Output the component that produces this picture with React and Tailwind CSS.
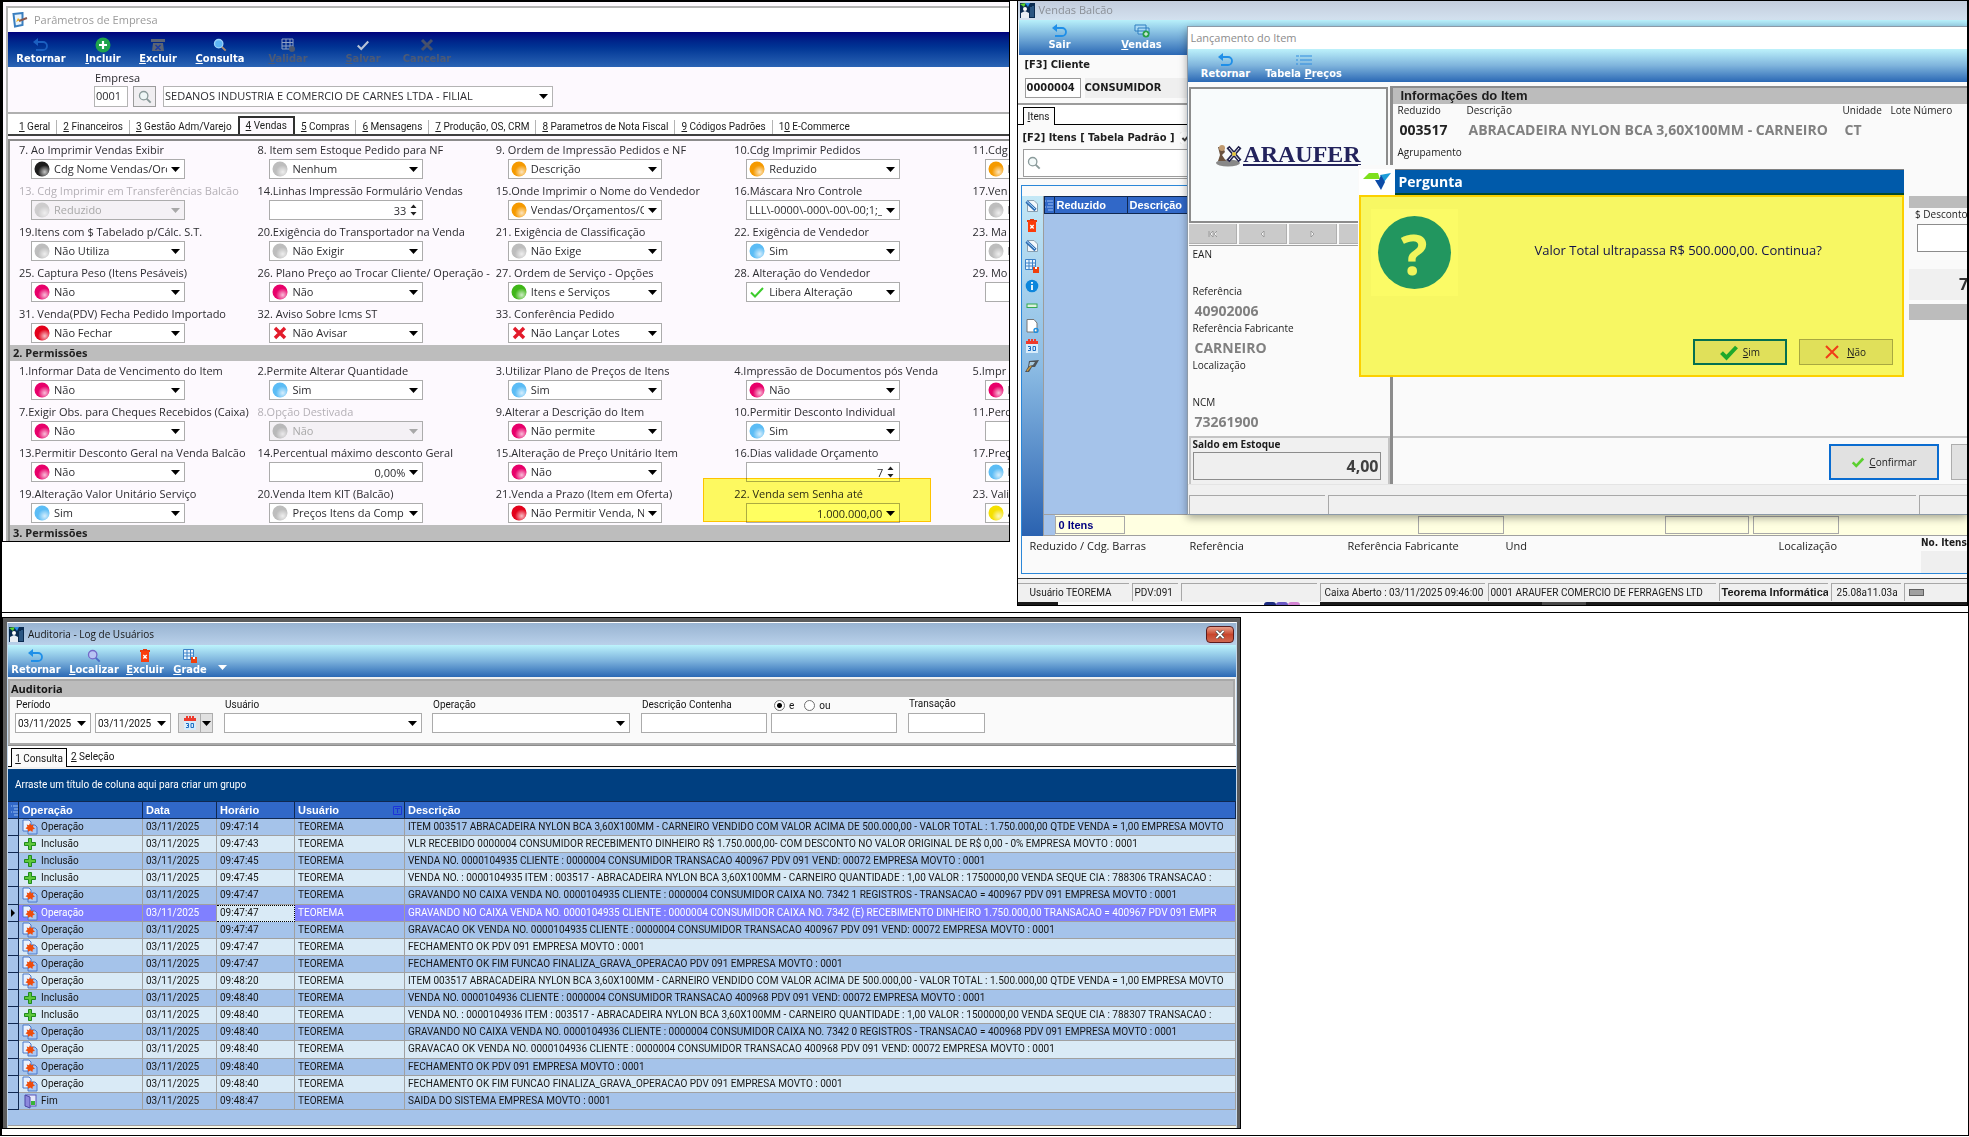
import { useId } from 'react';

const BALLS = {
  black: '#1c1c1c',
  gray: '#bdbdbd',
  dark: '#a0a0a0',
  orange: '#f59a00',
  blue: '#5bbcf5',
  pink: '#e8006a',
  green: '#3fb618',
  red: '#e3001b',
  yellow: '#f5e000',
};

const SECTION_1 = [
  { label: '7. Ao Imprimir Vendas Exibir', icon: 'black', value: 'Cdg Nome Vendas/Orçamentos' },
  { label: '8. Item sem Estoque Pedido para NF', icon: 'gray', value: 'Nenhum' },
  { label: '9. Ordem de Impressão Pedidos e NF', icon: 'orange', value: 'Descrição' },
  { label: '10.Cdg Imprimir Pedidos', icon: 'orange', value: 'Reduzido' },
  { label: '11.Cdg', icon: 'orange', value: 'R' },
  { label: '13. Cdg Imprimir em Transferências Balcão', icon: 'gray', value: 'Reduzido', disabled: true },
  { label: '14.Linhas Impressão Formulário Vendas', type: 'spin', value: '33' },
  { label: '15.Onde Imprimir o Nome do Vendedor', icon: 'orange', value: 'Vendas/Orçamentos/OS' },
  { label: '16.Máscara Nro Controle', value: 'LLL\\-0000\\-000\\-00\\-00;1;_' },
  { label: '17.Ven', icon: 'gray', value: 'N' },
  { label: '19.Itens com $ Tabelado p/Cálc. S.T.', icon: 'gray', value: 'Não Utiliza' },
  { label: '20.Exigência do Transportador na Venda', icon: 'gray', value: 'Não Exigir' },
  { label: '21. Exigência de Classificação', icon: 'gray', value: 'Não Exige' },
  { label: '22. Exigência de Vendedor', icon: 'blue', value: 'Sim' },
  { label: '23. Ma', icon: 'gray', value: 'N' },
  { label: '25. Captura Peso (Itens Pesáveis)', icon: 'pink', value: 'Não' },
  { label: '26. Plano Preço ao Trocar Cliente/ Operação -', icon: 'pink', value: 'Não' },
  { label: '27. Ordem de Serviço - Opções', icon: 'green', value: 'Itens e Serviços' },
  { label: '28. Alteração do Vendedor', icon: 'check', value: 'Libera Alteração' },
  { label: '29. Mo', type: 'text', value: '' },
  { label: '31. Venda(PDV) Fecha Pedido Importado', icon: 'red', value: 'Não Fechar' },
  { label: '32. Aviso Sobre Icms ST', icon: 'cross', value: 'Não Avisar' },
  { label: '33. Conferência Pedido', icon: 'cross', value: 'Não Lançar Lotes' },
];

const SECTION_2 = [
  { label: '1.Informar Data de Vencimento do Item', icon: 'pink', value: 'Não' },
  { label: '2.Permite Alterar Quantidade', icon: 'blue', value: 'Sim' },
  { label: '3.Utilizar Plano de Preços de Itens', icon: 'blue', value: 'Sim' },
  { label: '4.Impressão de Documentos pós Venda', icon: 'pink', value: 'Não' },
  { label: '5.Impr', icon: 'pink', value: 'N' },
  { label: '7.Exigir Obs. para Cheques Recebidos (Caixa)', icon: 'pink', value: 'Não' },
  { label: '8.Opção Destivada', icon: 'dark', value: 'Não', disabled: true },
  { label: '9.Alterar a Descrição do Item', icon: 'pink', value: 'Não permite' },
  { label: '10.Permitir Desconto Individual', icon: 'blue', value: 'Sim' },
  { label: '11.Perc', type: 'text', value: '' },
  { label: '13.Permitir Desconto Geral na Venda Balcão', icon: 'pink', value: 'Não' },
  { label: '14.Percentual máximo desconto Geral', type: 'number', value: '0,00%' },
  { label: '15.Alteração de Preço Unitário Item', icon: 'pink', value: 'Não' },
  { label: '16.Dias validade Orçamento', type: 'spin', value: '7' },
  { label: '17.Preç', icon: 'blue', value: 'N' },
  { label: '19.Alteração Valor Unitário Serviço', icon: 'blue', value: 'Sim' },
  { label: '20.Venda Item KIT (Balcão)', icon: 'gray', value: 'Preços Itens da Comp' },
  { label: '21.Venda a Prazo (Item em Oferta)', icon: 'red', value: 'Não Permitir Venda, Na' },
  { label: '22. Venda sem Senha até', type: 'number', value: '1.000.000,00', highlight: true },
  { label: '23. Vali', icon: 'yellow', value: 'A' },
];

const TABS = [
  ['1', 'Geral'],
  ['2', 'Financeiros'],
  ['3', 'Gestão Adm/Varejo'],
  ['4', 'Vendas'],
  ['5', 'Compras'],
  ['6', 'Mensagens'],
  ['7', 'Produção, OS, CRM'],
  ['8', 'Parametros de Nota Fiscal'],
  ['9', 'Códigos Padrões'],
  ['10', 'E-Commerce'],
];

const LOG = [
  ['Operação', '09:47:14', 'ITEM 003517 ABRACADEIRA NYLON BCA 3,60X100MM - CARNEIRO VENDIDO COM VALOR ACIMA DE 500.000,00 - VALOR TOTAL : 1.750.000,00 QTDE VENDA = 1,00 EMPRESA MOVTO'],
  ['Inclusão', '09:47:43', 'VLR RECEBIDO 0000004 CONSUMIDOR RECEBIMENTO DINHEIRO R$ 1.750.000,00- COM DESCONTO NO VALOR ORIGINAL DE R$ 0,00 - 0% EMPRESA MOVTO : 0001'],
  ['Inclusão', '09:47:45', 'VENDA NO. 0000104935 CLIENTE : 0000004 CONSUMIDOR TRANSACAO 400967 PDV 091 VEND: 00072 EMPRESA MOVTO : 0001'],
  ['Inclusão', '09:47:45', 'VENDA NO. : 0000104935 ITEM : 003517 - ABRACADEIRA NYLON BCA 3,60X100MM - CARNEIRO QUANTIDADE : 1,00 VALOR : 1750000,00 VENDA SEQUE CIA : 788306 TRANSACAO :'],
  ['Operação', '09:47:47', 'GRAVANDO NO CAIXA VENDA NO. 0000104935 CLIENTE : 0000004 CONSUMIDOR CAIXA NO. 7342 1 REGISTROS - TRANSACAO = 400967 PDV 091 EMPRESA MOVTO : 0001'],
  ['Operação', '09:47:47', 'GRAVANDO NO CAIXA VENDA NO. 0000104935 CLIENTE : 0000004 CONSUMIDOR CAIXA NO. 7342 (E) RECEBIMENTO DINHEIRO 1.750.000,00 TRANSACAO = 400967 PDV 091 EMPR'],
  ['Operação', '09:47:47', 'GRAVACAO OK VENDA NO. 0000104935 CLIENTE : 0000004 CONSUMIDOR TRANSACAO 400967 PDV 091 VEND: 00072 EMPRESA MOVTO : 0001'],
  ['Operação', '09:47:47', 'FECHAMENTO OK PDV 091 EMPRESA MOVTO : 0001'],
  ['Operação', '09:47:47', 'FECHAMENTO OK FIM FUNCAO FINALIZA_GRAVA_OPERACAO PDV 091 EMPRESA MOVTO : 0001'],
  ['Operação', '09:48:20', 'ITEM 003517 ABRACADEIRA NYLON BCA 3,60X100MM - CARNEIRO VENDIDO COM VALOR ACIMA DE 500.000,00 - VALOR TOTAL : 1.500.000,00 QTDE VENDA = 1,00 EMPRESA MOVTO'],
  ['Inclusão', '09:48:40', 'VENDA NO. 0000104936 CLIENTE : 0000004 CONSUMIDOR TRANSACAO 400968 PDV 091 VEND: 00072 EMPRESA MOVTO : 0001'],
  ['Inclusão', '09:48:40', 'VENDA NO. : 0000104936 ITEM : 003517 - ABRACADEIRA NYLON BCA 3,60X100MM - CARNEIRO QUANTIDADE : 1,00 VALOR : 1500000,00 VENDA SEQUE CIA : 788307 TRANSACAO :'],
  ['Operação', '09:48:40', 'GRAVANDO NO CAIXA VENDA NO. 0000104936 CLIENTE : 0000004 CONSUMIDOR CAIXA NO. 7342 0 REGISTROS - TRANSACAO = 400968 PDV 091 EMPRESA MOVTO : 0001'],
  ['Operação', '09:48:40', 'GRAVACAO OK VENDA NO. 0000104936 CLIENTE : 0000004 CONSUMIDOR TRANSACAO 400968 PDV 091 VEND: 00072 EMPRESA MOVTO : 0001'],
  ['Operação', '09:48:40', 'FECHAMENTO OK PDV 091 EMPRESA MOVTO : 0001'],
  ['Operação', '09:48:40', 'FECHAMENTO OK FIM FUNCAO FINALIZA_GRAVA_OPERACAO PDV 091 EMPRESA MOVTO : 0001'],
  ['Fim', '09:48:47', 'SAIDA DO SISTEMA EMPRESA MOVTO : 0001'],
];

/* ---------- icons ---------- */

function Ball({ color, faded }) {
  const id = useId();
  return (
    <svg viewBox="0 0 16 16" className={`w-4 h-4 shrink-0 ${faded ? 'opacity-70' : ''}`}>
      <defs>
        <radialGradient id={id} cx="0.68" cy="0.7" r="0.45">
          <stop offset="0" stopColor="#fff" stopOpacity="0.75" />
          <stop offset="1" stopColor="#fff" stopOpacity="0" />
        </radialGradient>
      </defs>
      <circle cx="8" cy="8" r="7.5" fill={BALLS[color]} />
      <circle cx="8" cy="8" r="7.5" fill={`url(#${id})`} />
    </svg>
  );
}

const Cross = () => (
  <svg viewBox="0 0 16 16" className="w-4 h-4 shrink-0">
    <path d="M3 3L13 13M13 3L3 13" stroke="#e31b2b" strokeWidth="3.4" />
  </svg>
);

const Check = ({ className = 'w-4 h-4', color = '#3ccc2c', width = 2 }) => (
  <svg viewBox="0 0 16 16" className={`shrink-0 ${className}`}>
    <path d="M2 8.5L6 12.5L14 4" fill="none" stroke={color} strokeWidth={width} />
  </svg>
);

const Arrow = ({ color = '#000' }) => (
  <svg viewBox="0 0 9 5" className="w-[9px] h-[5px] shrink-0">
    <path d="M0 0H9L4.5 5Z" fill={color} />
  </svg>
);

const Back = ({ color = '#1f8fe8' }) => (
  <svg viewBox="0 0 16 14" className="w-4 h-[14px]">
    <path d="M5 0L0 4L5 8Z" fill={color} />
    <path d="M3 4H10A4 4 0 0 1 10 12H3" fill="none" stroke={color} strokeWidth="1.8" />
  </svg>
);

const Lens = ({ glass = '#fff', rim = '#8a9a9a', handle = '#8a9a9a' }) => (
  <svg viewBox="0 0 16 16" className="w-[14px] h-[14px] shrink-0">
    <path d="M9.5 9.5L14.5 14.5" stroke={handle} strokeWidth="2.2" />
    <circle cx="6.5" cy="6.5" r="4.8" fill={glass} stroke={rim} strokeWidth="1.5" />
  </svg>
);

const Trash = () => (
  <svg viewBox="0 0 14 14" className="w-[14px] h-[14px]">
    <path d="M5 0H9V1H12V3H2V1H5Z" fill="#e03a10" />
    <rect x="3" y="2" width="8" height="11" fill="#fb3d0b" />
    <path d="M5.3 6L8.700 9.400M8.700 6L5.300 9.400" stroke="#fff" strokeWidth="1.4" />
  </svg>
);

const GridIcon = () => (
  <svg viewBox="0 0 14 14" className="w-[14px] h-[14px]">
    <rect x="0.5" y="0.5" width="10" height="10" fill="#e8f4fd" />
    <path d="M0.5 0.5H10.5V10.5H0.5ZM0.5 4H10.500M0.5 7H10.500M4 0.5V10.5M7.500 0.5V10.5" fill="none" stroke="#3c82c8" />
    <rect x="8" y="8" width="6" height="6" fill="#f0400c" />
    <rect x="10" y="8" width="2" height="2" fill="#fff" />
  </svg>
);

const Calendar = () => (
  <svg viewBox="0 0 14 14" className="w-[14px] h-[14px] shrink-0">
    <rect x="1" y="4" width="12" height="10" fill="#d8ecfb" />
    <path d="M1 2H3V0H5V2H6V0H8V2H9V0H11V2H13V5H1Z" fill="#ee3a2c" />
    <path d="M3 7.500H5.500V11.500H3M4 9.500H5.500M8 7.500H10.500V11.500H8Z" fill="none" stroke="#1c6fc4" />
  </svg>
);

const Note = () => (
  <svg viewBox="0 0 14 14" className="w-[14px] h-[14px]">
    <path d="M2.500 1.500H9L12.500 5V12.500H2.500Z" fill="#f4f8fc" stroke="#8aa0b0" />
    <path d="M1.500 2.500L10.500 11" stroke="#2c6cb4" strokeWidth="3.2" />
    <path d="M2 2.500L10 10" stroke="#bfe0f8" />
  </svg>
);

const Info = () => (
  <svg viewBox="0 0 14 14" className="w-[14px] h-[14px]">
    <circle cx="7" cy="7" r="6.3" fill="#0d86dc" />
    <path d="M7 3V4.8M7 6V11" stroke="#fff" strokeWidth="1.8" />
  </svg>
);

const Bar = () => (
  <svg viewBox="0 0 14 14" className="w-[14px] h-[14px]">
    <rect x="2" y="5" width="10" height="3.5" fill="#dff2dd" stroke="#35a853" />
  </svg>
);

const Page = () => (
  <svg viewBox="0 0 14 14" className="w-[14px] h-[14px]">
    <path d="M2 0.5H9L12 4V13H2Z" fill="#fff" stroke="#777" />
    <circle cx="11" cy="11.5" r="2" fill="none" stroke="#1d8fe0" strokeWidth="1.4" />
  </svg>
);

const Scanner = () => (
  <svg viewBox="0 0 14 14" className="w-[14px] h-[14px]">
    <path d="M4 2L14 1L10 8L7 8L4 13L0 13L3 8Z" fill="#4d5358" />
    <path d="M5 3L10 3L8 6L4 7Z" fill="#a8cbe0" />
    <path d="M2 12L6 7" stroke="#c8963c" strokeWidth="1.4" />
  </svg>
);

const AppIcon = () => (
  <svg viewBox="0 0 15 15" className="w-[15px] h-[15px] shrink-0">
    <rect width="15" height="15" fill="#0a2b50" />
    <path d="M0 1L6 0L4 4Z" fill="#5ad42c" />
    <path d="M5 0H10L8 4Z" fill="#2a8ce8" />
    <circle cx="5" cy="6" r="2" fill="#fff" />
    <path d="M1 15V10L5 8L9 10V15Z" fill="#e8eef4" />
    <path d="M11 4V14M13 3V14" stroke="#4c82b4" />
  </svg>
);

const OperationIcon = () => (
  <svg viewBox="0 0 16 16" className="w-4 h-4 shrink-0">
    <path d="M1 1H7L9 3V12H1Z" fill="#e8f1ff" stroke="#4b79c9" />
    <path d="M8 6H13L15 8V15H6V12Z" fill="#a9c8f5" stroke="#4b79c9" />
    <path d="M8 4L9.2 6.3L11.6 5.6L11 8L13 9.5L10.700 10.400L10.500 13L8.300 11.500L6 12.800L5.800 10.400L3.500 9.300L5.400 7.800L4.700 5.500L7 6.200Z" fill="#ee4c0c" />
  </svg>
);

const InclusionIcon = () => (
  <svg viewBox="0 0 16 16" className="w-4 h-4 shrink-0">
    <path d="M6.500 2.500H9.500V6.500H13.500V9.500H9.500V13.500H6.500V9.500H2.500V6.500H6.500Z" fill="#5ec83a" stroke="#1f8a1c" />
  </svg>
);

const EndIcon = () => (
  <svg viewBox="0 0 16 16" className="w-4 h-4 shrink-0">
    <rect x="4" y="2" width="10" height="11" fill="#e4e8fa" stroke="#5a55b8" />
    <rect x="9" y="8" width="4" height="4" fill="#39b43a" />
    <path d="M3 2L8 4V15L3 13Z" fill="#8c88dc" stroke="#4b46a4" />
  </svg>
);

const LOG_ICONS = { Operação: OperationIcon, Inclusão: InclusionIcon, Fim: EndIcon };
const LINE = 'flex items-center whitespace-nowrap';

/* ---------- shared pieces ---------- */

// The underlined letter is the keyboard shortcut; at = -1 means none.
function Tool({ icon, text, at = 0, disabled, className = '' }) {
  return (
    <button type="button" disabled={disabled} className={`flex flex-col items-center justify-end whitespace-nowrap font-['DejaVu_Sans_Condensed',sans-serif] text-[11px] leading-3 font-bold ${disabled ? 'text-[#4c5a76]' : 'text-white'} ${className}`}>
      <span className="flex h-4 items-center justify-center">{icon}</span>
      <span>
        {at < 0 ? text : <>{text.slice(0, at)}<u>{text[at]}</u>{text.slice(at + 1)}</>}
      </span>
    </button>
  );
}

function Field({ label, icon, value, type, disabled, highlight }) {
  const id = useId();
  const isBall = icon && BALLS[icon];
  return (
    <div className={highlight ? 'relative' : ''}>
      <label htmlFor={id} className={`block h-4 leading-4 whitespace-nowrap ${disabled ? 'text-[#b4b0b6]' : 'text-[#2c2c30]'}`}>{label}</label>
      <div className={`mt-px ml-3 flex h-5 w-[154px] items-center gap-1 border border-[#acacac] pl-[2px] pr-1 ${disabled ? 'bg-[#f4f1f5] text-[#a8a8a8]' : 'bg-white text-[#2c2c30]'}`}>
        {isBall && <Ball color={icon} faded={disabled} />}
        {icon === 'cross' && <Cross />}
        {icon === 'check' && <Check />}
        {type ? (
          <input id={id} defaultValue={value} className="h-full min-w-0 flex-1 bg-transparent text-right outline-none" />
        ) : (
          <select id={id} disabled={disabled} className="h-full min-w-0 flex-1 appearance-none overflow-hidden bg-transparent opacity-100 outline-none">
            <option>{value}</option>
          </select>
        )}
        {type === 'spin' ? (
          <svg viewBox="0 0 7 12" className="mr-px h-3 w-[7px] shrink-0"><path d="M0.500 4L3.500 0.500L6.500 4ZM0.500 8L3.500 11.500L6.500 8Z" fill="#222" /></svg>
        ) : type !== 'text' && <Arrow color={disabled ? '#a8a8a8' : '#000'} />}
      </div>
      {highlight && <div className="pointer-events-none absolute -left-[31px] -top-2 h-11 w-[228px] border border-[#ffc800] bg-[#ffff60] mix-blend-multiply" />}
    </div>
  );
}

function SectionTitle({ children }) {
  return <h2 className="h-4 bg-[#bdbdbd] pl-[3px] font-bold leading-4 text-[#222]">{children}</h2>;
}

/* ---------- Parâmetros de Empresa ---------- */

function CompanyParams() {
  return (
    <section className="min-w-0 self-start overflow-hidden border border-black bg-[#fdf9fe] font-['Open_Sans','Noto_Sans',sans-serif] text-[11px]">
      <div className="ml-[3px] mt-1 border-l-2 border-t-2 border-[#b4b4b4]">
        <header className={`${LINE} h-6 gap-[6px] bg-white pl-1 text-[#9a9a9a]`}>
          <svg viewBox="0 0 16 16" className="h-4 w-4">
            <path d="M1.500 2L10.500 1V13L3 14.500Z" fill="#e8f4fc" stroke="#3a7fc0" strokeWidth="2" />
            <path d="M7 9L15 6" stroke="#8a5a50" strokeWidth="2" />
            <path d="M4 10L8 8L6 6Z" fill="#f0b020" />
          </svg>
          <span>Parâmetros de Empresa</span>
        </header>
        <nav className="flex h-[35px] bg-linear-to-b from-[#00007c] to-[#2a63b4] pb-[2px]">
          <Tool at={-1} text="Retornar" icon={<Back color="#1b5fc0" />} className="w-[66px]" />
          <Tool
            text="Incluir"
            className="w-[58px]"
            icon={<svg viewBox="0 0 16 16" className="h-4 w-4"><circle cx="8" cy="8" r="7.500" fill="#1fa34c" /><path d="M8 4V12M4 8H12" stroke="#fff" strokeWidth="2.200" /></svg>}
          />
          <Tool
            text="Excluir"
            className="w-[52px]"
            icon={<svg viewBox="0 0 14 14" className="h-[14px] w-[14px]"><path d="M0 1H14V4H0ZM2 5H12L13 13H1Z" fill="#5c6474" /><path d="M4.500 7L9.500 12M9.500 7L4.500 12" stroke="#1c3ca0" strokeWidth="1.500" /></svg>}
          />
          <Tool text="Consulta" icon={<Lens glass="#5db4f4" rim="#9cd4fb" handle="#b08d70" />} className="w-[72px]" />
          <Tool
            text="Validar"
            disabled
            className="w-[64px]"
            icon={<svg viewBox="0 0 14 14" className="h-[14px] w-[14px]"><path d="M1 1H12V11H1ZM1 4.500H12M1 8H12M5 1V11M9 1V11" fill="none" stroke="#8ea0c4" /><circle cx="11" cy="11" r="3" fill="#4c5870" /></svg>}
          />
          <Tool text="Salvar" disabled icon={<Check className="h-[14px] w-[14px]" color="#b8c4d8" width={2.4} />} className="ml-3 w-[62px]" />
          <Tool
            text="Cancelar"
            at={-1}
            disabled
            className="w-[66px]"
            icon={<svg viewBox="0 0 14 14" className="h-[14px] w-[14px]"><path d="M2 2L12 12M12 2L2 12" stroke="#46506a" strokeWidth="3" /></svg>}
          />
        </nav>
        <div className="h-[45px] pt-[3px]">
          <label htmlFor="empresa" className="ml-[87px] block h-4 leading-4 text-[#2c2c30]">Empresa</label>
          <div className="ml-[86px] flex h-[21px] items-stretch text-[#2c2c30]">
            <input id="empresa" defaultValue="0001" className="w-[34px] border border-[#b4b4b4] bg-white pl-px outline-none" />
            <button type="button" aria-label="Procurar" className="ml-[5px] flex w-[23px] items-center justify-center border border-[#9c9c9c] bg-[#f0eef1]"><Lens glass="#eef6f6" /></button>
            <div className="ml-[7px] flex w-[390px] items-center border border-[#b4b4b4] bg-white pl-px pr-1">
              <select aria-label="Nome da empresa" className="h-full flex-1 appearance-none outline-none"><option>SEDANOS INDUSTRIA E COMERCIO DE CARNES LTDA - FILIAL</option></select>
              <Arrow />
            </div>
          </div>
        </div>
        <nav className="flex h-6 items-end border-b-2 border-t-2 border-b-[#404040] border-t-[#b0b0b0] bg-white pl-[5px] font-['Roboto',sans-serif] text-[10px] text-[#1c1c1c]">
          {TABS.map(([key, name]) => {
            const active = key === '4';
            return (
              <button key={key} type="button" className={`whitespace-nowrap px-[6px] ${active ? 'h-[18px] border-x-2 border-t-2 border-[#303030] bg-[#fdf9fe]' : 'h-[14px]'} ${!active && key !== '3' && key !== '10' ? 'border-r border-[#b4b4b4]' : ''} leading-3`}>
                {key.slice(0, -1)}<u>{key.slice(-1)}</u> {name}
              </button>
            );
          })}
        </nav>
        <div className="mt-[3px] border-l-2 border-t-2 border-[#8c8c8c]">
          <div className="ml-[9px] grid w-[1192px] grid-cols-5 gap-y-1 pb-[2px] pt-px">
            {SECTION_1.map((f) => <Field key={f.label} {...f} />)}
          </div>
          <SectionTitle>2. Permissões</SectionTitle>
          <div className="ml-[9px] grid w-[1192px] grid-cols-5 gap-y-1 py-[2px]">
            {SECTION_2.map((f) => <Field key={f.label} {...f} />)}
          </div>
          <SectionTitle>3. Permissões</SectionTitle>
        </div>
      </div>
    </section>
  );
}

/* ---------- Vendas Balcão ---------- */

const SIDE_ICONS = [Note, Trash, Note, GridIcon, Info, Bar, Page, Calendar, Scanner];

function ItemValue({ label, value }) {
  return (
    <div className="h-[37px] pl-1">
      <div className="h-[18px] leading-4">{label}</div>
      <output className="block pl-[2px] text-[14px] font-bold leading-[19px] text-[#808080]">{value}</output>
    </div>
  );
}

const First = () => <svg viewBox="0 0 9 6" className="h-[6px] w-[9px]"><path d="M1 0V6M5 0L2 3L5 6ZM9 0L6 3L9 6Z" fill="#f4f4f4" stroke="#909090" strokeWidth="0.8" /></svg>;
const Prev = () => <svg viewBox="0 0 5 6" className="h-[6px] w-[5px]"><path d="M4 0L1 3L4 6Z" fill="#f4f4f4" stroke="#909090" strokeWidth="0.8" /></svg>;
const Next = () => <svg viewBox="0 0 5 6" className="h-[6px] w-[5px]"><path d="M1 0L4 3L1 6Z" fill="#f4f4f4" stroke="#909090" strokeWidth="0.8" /></svg>;
const NAV_BUTTONS = [['Primeiro', First], ['Anterior', Prev], ['Próximo', Next], ['Último', Next]];

function ItemDialog() {
  return (
    <div className="absolute left-[169px] right-0 top-[25px] flex h-[489px] flex-col overflow-hidden border border-r-0 border-[#8c9aa8] bg-[#fafafa] shadow-[0_3px_8px_rgba(0,0,0,0.35)]">
      <header className={`${LINE} h-[22px] shrink-0 bg-white pl-[3px] text-[11px] text-[#8c8c8c]`}>Lançamento do Item</header>
      <nav className="flex h-[33px] shrink-0 bg-linear-to-b from-[#bdf2fb] via-[#7fb4dc] to-[#2a68b4] pb-[2px]">
        <Tool text="Retornar" at={-1} icon={<Back />} className="w-[76px]" />
        <Tool
          text="Tabela Preços"
          at={7}
          className="w-[80px]"
          icon={<svg viewBox="0 0 16 12" className="h-3 w-4"><path d="M4 2H16M4 6H16M4 10H16M0 2H3M0 6H2M0 10H2" stroke="#2f8be0" strokeWidth="1.200" /></svg>}
        />
      </nav>
      <div className="flex min-h-0 flex-1">
        <div className="w-[202px] shrink-0 pl-px pt-[5px]">
          <div className="mr-[2px] flex h-[136px] items-center justify-center border-2 border-[#8c8c8c] bg-[#f8fbfc]">
            <svg viewBox="0 0 28 24" className="h-6 w-7">
              <ellipse cx="13" cy="20" rx="12" ry="3.500" fill="#888" />
              <path d="M3 4H8L10 9L7 12L11 18H3L5 12Z" fill="#6c5440" />
              <circle cx="7" cy="5" r="3" fill="#c09a70" />
              <path d="M13 4L25 18M25 4L13 18" stroke="#23234c" strokeWidth="4" />
              <path d="M14 5L24 17M24 5L14 17" stroke="#f0f0f8" strokeWidth="1" />
              <circle cx="19" cy="11" r="2" fill="#e8c840" />
            </svg>
            <span className="border-b-2 border-[#23235c] font-['Liberation_Serif',serif] text-[24px] font-bold leading-5 text-[#23235c]">ARAUFER</span>
          </div>
          <div className="mt-px flex h-[22px] gap-[2px] overflow-hidden border-b border-[#a0a0a0]">
            {NAV_BUTTONS.map(([name, Icon]) => (
              <button key={name} type="button" aria-label={name} className="flex h-5 w-12 shrink-0 items-center justify-center border-b border-r border-[#b0b0b0] bg-[#cacaca]"><Icon /></button>
            ))}
          </div>
          <ItemValue label="EAN" />
          <ItemValue label="Referência" value="40902006" />
          <ItemValue label="Referência Fabricante" value="CARNEIRO" />
          <ItemValue label="Localização" />
          <ItemValue label="NCM" value="73261900" />
          <div className="mt-[5px] h-[50px] border-2 border-[#c4c4c4] bg-[#f0f0f0] pl-[2px]">
            <label htmlFor="saldo" className="block h-[14px] font-bold leading-3">Saldo em Estoque</label>
            <input id="saldo" defaultValue="4,00" className="h-7 w-[188px] border border-[#8c8c8c] bg-[#efefef] pr-px text-right text-[16px] font-bold text-[#404040] outline-none" />
          </div>
        </div>
        <div className="mt-1 flex min-w-0 flex-1 flex-col border-l-[3px] border-t-2 border-[#8c8c8c]">
          <h3 className="h-4 shrink-0 bg-[#bcbcbc] pl-2 font-['Liberation_Sans',sans-serif] text-[13px] font-bold leading-4">Informações do Item</h3>
          <div className="grid grid-cols-[69px_376px_48px_1fr] gap-y-1 pl-[5px]">
            {['Reduzido', 'Descrição', 'Unidade', 'Lote Número'].map((t) => <span key={t} className="h-[14px] whitespace-nowrap leading-3">{t}</span>)}
            <output className="pl-[2px] text-[14px] font-bold leading-4 text-[#222]">003517</output>
            <output className="whitespace-nowrap pl-[2px] text-[14px] font-bold leading-4 text-[#808080]">ABRACADEIRA NYLON BCA 3,60X100MM - CARNEIRO</output>
            <output className="pl-[2px] text-[14px] font-bold leading-4 text-[#808080]">CT</output>
          </div>
          <div className="pl-[5px] pt-[6px] leading-4">Agrupamento</div>
          <div className="mt-9 flex flex-1 flex-col self-end w-[58px] overflow-hidden">
            <div className="h-3 bg-[#bcbcbc]" />
            <label htmlFor="desconto" className="h-4 whitespace-nowrap pl-[6px] leading-3">$ Desconto</label>
            <input id="desconto" className="ml-2 h-7 w-20 border border-[#8c8c8c] bg-white outline-none" />
            <output className="mt-[17px] h-[31px] bg-[#f0f0f0] pl-[50px] text-[16px] font-bold leading-[31px] text-[#333]">7</output>
            <div className="mt-1 h-4 bg-[#bcbcbc]" />
          </div>
          <div className="flex h-12 shrink-0 justify-end gap-3 overflow-hidden border-t-2 border-[#c8c8c8] pt-[6px]">
            <button type="button" className={`${LINE} h-9 w-[110px] justify-center gap-1 border-2 border-[#0a6cd0] bg-[#e1e1e1]`}>
              <Check className="h-[14px] w-[14px]" color="#5cd030" width={3} />
              <span><u>C</u>onfirmar</span>
            </button>
            <button type="button" aria-label="Cancelar" className="h-9 w-4 border border-r-0 border-[#adadad] bg-[#e1e1e1]" />
          </div>
        </div>
      </div>
      <div className="flex h-[30px] shrink-0 gap-[3px] border-t border-[#e4e4e4] bg-[#f0f0f0] pl-px pt-[10px]">
        <div className="w-[136px] border-l border-t border-[#a8a8a8]" />
        <div className="flex-1 border-l border-t border-[#a8a8a8]" />
        <div className="w-12 border-l border-t border-[#a8a8a8]" />
      </div>
    </div>
  );
}

function QuestionDialog() {
  return (
    <div role="alertdialog" aria-label="Pergunta" className="absolute left-[340px] top-[164px] w-[549px] bg-[#fafafa] pl-px pr-[3px] pt-1">
      <div className="flex h-[26px]">
        <div className="flex w-9 items-center justify-center bg-white">
          <svg viewBox="0 0 28 18" className="h-[18px] w-7">
            <path d="M0 6L6 0H15L17 6Z" fill="#7ee01c" />
            <path d="M17 2L28 0L21 9Z" fill="#1c9cd8" />
            <path d="M12 7H16L18 2L22 9L18 17Z" fill="#0c4ca8" />
          </svg>
        </div>
        <h2 className="flex-1 border-b-2 border-t border-b-[#044a2c] border-t-[#808080] bg-[#005aaa] pl-1 text-[14px] font-bold leading-6 text-white">Pergunta</h2>
      </div>
      <div className="flex h-[182px] flex-col border-2 border-[#fcd000] bg-[#f7f763]">
        <div className="flex flex-1 pl-[10px] pt-3">
          <div className="flex h-[87px] w-[87px] items-center justify-center bg-[#fbfb66]">
            <div className="flex h-[73px] w-[73px] items-center justify-center rounded-full bg-[#22965f] font-['Open_Sans',sans-serif] text-[56px] font-bold leading-none text-[#f0f55c]">?</div>
          </div>
          <p className="flex-1 pl-[77px] pt-[31px] text-[13px] leading-5 text-[#10104a]">Valor Total ultrapassa R$ 500.000,00. Continua?</p>
        </div>
        <div className="flex h-9 justify-end gap-3 pr-[9px]">
          <button type="button" className={`${LINE} h-[26px] w-[94px] justify-center gap-1 border-2 border-[#047050] bg-[#e0e05a]`}>
            <Check className="h-5 w-5" color="#1ea82c" width={3.2} />
            <span><u>S</u>im</span>
          </button>
          <button type="button" className={`${LINE} h-[26px] w-[94px] justify-center gap-2 border border-[#a8a840] bg-[#e0e05a]`}>
            <svg viewBox="0 0 14 14" className="h-[14px] w-[14px]"><path d="M1 1L13 13M13 1L1 13" stroke="#f03c18" strokeWidth="2" /></svg>
            <span><u>N</u>ão</span>
          </button>
        </div>
      </div>
    </div>
  );
}

const STATUS = 'flex h-[18px] items-center overflow-hidden whitespace-nowrap border-l border-t border-[#a8a8a8]';

function CounterSales() {
  return (
    <section className="relative flex min-w-0 flex-col self-start overflow-hidden border-x border-b border-black bg-[#fafafa] font-['Open_Sans','Noto_Sans',sans-serif] text-[10px] text-[#1c1c1c]">
      <header className={`${LINE} h-[19px] gap-1 bg-linear-to-b from-[#c3cddd] to-[#d3e1ef] pl-[2px] text-[11px] text-[#8a8f96]`}>
        <AppIcon />
        <span>Vendas Balcão</span>
      </header>
      <nav className="ml-px flex h-[35px] bg-linear-to-b from-[#b8f0fa] via-[#74acd8] to-[#2a68b4] pb-1">
        <Tool text="Sair" at={-1} icon={<Back />} className="w-[82px]" />
        <Tool
          text="Vendas"
          className="w-[82px]"
          icon={<svg viewBox="0 0 16 14" className="h-[14px] w-4"><path d="M1 1H12V7H1ZM4 4H15V10H4Z" fill="#a8d8f4" stroke="#2f7fc0" /><circle cx="12" cy="10" r="3.500" fill="#28a048" /><path d="M12 8V12M10 10H14" stroke="#fff" /></svg>}
        />
      </nav>
      <div className="h-[50px] border-b-2 border-[#9c9c9c] pl-[7px] font-['DejaVu_Sans_Condensed',sans-serif] text-[11px] font-bold">
        <label htmlFor="cliente" className="block h-[23px] leading-5">[F3] Cliente</label>
        <div className="flex h-5 items-stretch gap-1">
          <input id="cliente" defaultValue="0000004" className="w-14 border border-[#9c9c9c] bg-white pl-px outline-none" />
          <output className="flex-1 bg-[#efefef] leading-5">CONSUMIDOR</output>
        </div>
      </div>
      <div className="flex h-5 items-end border-b border-black bg-white pl-[5px] font-['Roboto',sans-serif]">
        <button type="button" className="-mb-px h-[18px] w-8 border border-b-0 border-black bg-[#fafafa]"><u>I</u>tens</button>
      </div>
      <div className="h-[54px] border-b border-[#9c9c9c] pl-[5px] pt-1">
        <div className="flex h-[18px] items-center gap-[6px] font-['DejaVu_Sans_Condensed',sans-serif] text-[11px] font-bold">
          <label htmlFor="tabela">[F2] Itens [ Tabela Padrão ]</label>
          <input id="tabela" type="checkbox" defaultChecked className="h-3 w-3 accent-white" />
        </div>
        <div className="mt-[2px] flex h-7 items-center border border-[#9c9c9c] bg-white pl-[3px]">
          <Lens glass="#f4fafa" />
          <input aria-label="Procurar item" className="flex-1 outline-none" />
        </div>
      </div>
      <div className="ml-[3px] mt-[6px] border border-r-0 border-[#2b87d8]">
        <div className="flex h-[350px] pt-[10px]">
          <div className="flex w-[21px] flex-col items-center gap-[6px] bg-linear-to-b from-[#c4e8f6] via-[#8cbce4] to-[#2a62b0] pt-[3px]">
            {SIDE_ICONS.map((Icon, i) => <button key={i} type="button" className="h-[14px]" aria-label="Ferramenta"><Icon /></button>)}
          </div>
          <div className="flex flex-1 flex-col border-l border-[#9c9c9c] bg-[#a5c3ea]">
            <div className="flex h-[18px] border border-[#102850] bg-[#3168c8] font-['Liberation_Sans',sans-serif] text-[11px] font-bold leading-4 text-white">
              <span className="w-[10px] border-r border-[#102850]"><svg viewBox="0 0 8 12" className="mt-[2px] h-3 w-2"><path d="M2 2H8M3 5H8M2 8H8M3 11H8M0 2H1M0 8H1" stroke="#9cc0f4" /></svg></span>
              <span className="w-[73px] border-r border-[#102850] pl-[2px]">Reduzido</span>
              <span className="pl-[2px]">Descrição</span>
            </div>
            <div className="flex-1" />
            <div className="flex h-[22px] items-center border-y border-[#a0a0a0] bg-[#ffffe1]">
              <span className="h-full w-[11px] bg-[#a5c3ea]" />
              <span className="h-[18px] w-[70px] border border-[#a8a8a8] pl-[3px] font-['Liberation_Sans',sans-serif] text-[11px] font-bold leading-4 text-[#000080]">0 Itens</span>
              <span className="ml-[293px] h-[18px] w-[86px] border border-[#a8a8a8]" />
              <span className="ml-[161px] h-[18px] w-[84px] border border-[#a8a8a8]" />
              <span className="ml-1 h-[18px] w-[86px] border border-[#a8a8a8]" />
            </div>
          </div>
        </div>
        <div className="flex h-[37px] bg-[#fafafa] pl-2 text-[11px]">
          <span className="w-[160px] shrink-0 pt-[2px]">Reduzido / Cdg. Barras</span>
          <span className="w-[158px] shrink-0 pt-[2px]">Referência</span>
          <span className="w-[158px] shrink-0 pt-[2px]">Referência Fabricante</span>
          <span className="w-[273px] shrink-0 pt-[2px]">Und</span>
          <span className="flex-1 pt-[2px]">Localização</span>
          <div className="w-[46px] overflow-hidden whitespace-nowrap font-['DejaVu_Sans_Condensed',sans-serif] text-[10px] font-bold leading-[14px]">
            No. Itens
            <div className="mt-px h-[22px] bg-[#efefef]" />
          </div>
        </div>
      </div>
      <footer className="mt-1 flex gap-[3px] border-t border-[#404040] bg-[#f0f0f0] pb-px pt-1 font-['Roboto',sans-serif] text-[10px]">
        <span className={`${STATUS} w-[111px] border-l-0 pl-3`}>Usuário TEOREMA</span>
        <span className={`${STATUS} w-[46px] pl-[2px]`}>PDV:091</span>
        <span className={`${STATUS} w-[136px]`} />
        <span className={`${STATUS} w-[165px] pl-1`}>Caixa Aberto : 03/11/2025 09:46:00</span>
        <span className={`${STATUS} w-[228px] pl-[2px]`}>0001 ARAUFER COMERCIO DE FERRAGENS LTD</span>
        <span className={`${STATUS} w-[109px] pl-[2px] font-['Liberation_Sans',sans-serif] text-[11px] font-bold`}>Teorema Informática</span>
        <span className={`${STATUS} w-[70px] pl-[5px]`}>25.08a11.03a</span>
        <span className={`${STATUS} flex-1 pl-1`}><i className="h-[7px] w-[15px] border border-[#606060] bg-[#a0a0a0]" /></span>
      </footer>
      <div className="flex h-[3px] bg-[#1a1a1a]">
        <div className="ml-10 flex w-[262px] justify-end bg-[#fafafa] pr-5">
          <i className="w-3 rounded-t-full bg-[#1c2c80]" />
          <i className="w-3 rounded-t-full bg-[#6a58c4]" />
          <i className="w-3 rounded-t-full bg-[#d484d4]" />
        </div>
        <div className="ml-[222px] w-11 bg-[#484848]" />
      </div>
      <ItemDialog />
      <QuestionDialog />
    </section>
  );
}

/* ---------- Auditoria ---------- */

function Combo({ label, id, value, className }) {
  return (
    <div className={className}>
      <label htmlFor={id} className="block h-4 pl-px leading-4">{label}</label>
      <div className="flex h-5 items-center border border-[#ababab] bg-white pl-[2px] pr-1">
        <select id={id} className="h-full min-w-0 flex-1 appearance-none outline-none"><option>{value}</option></select>
        <Arrow />
      </div>
    </div>
  );
}

const CELL = 'overflow-hidden whitespace-nowrap border-b border-r border-[#a0a0a0] p-0 pl-[3px]';
const HEAD = 'h-[17px] overflow-hidden whitespace-nowrap border-b border-r border-[#102850] p-0 pl-[3px] text-left';
const INPUT = 'h-5 w-full border border-[#ababab] bg-white outline-none';
const RADIO = 'h-[11px] w-[11px] appearance-none rounded-full border border-[#707070] bg-white checked:bg-[radial-gradient(circle,#000_2px,#fff_3px)]';

function AuditLog() {
  return (
    <section className="mt-1 w-[63%] border border-black bg-[#5c5c5c] font-['Roboto',sans-serif] text-[10px] text-[#151515]">
      <div className="ml-1 mr-[3px] mt-1 border-x border-t border-x-[#c4d8ec] border-t-white bg-[#f0f0f0]">
        <header className={`${LINE} h-[22px] justify-between bg-linear-to-b from-[#98b3d1] to-[#b9d1ea] pl-px pr-[2px] font-['Open_Sans',sans-serif]`}>
          <span className="flex items-center gap-1"><AppIcon />Auditoria - Log de Usuários</span>
          <button type="button" aria-label="Fechar" className="flex h-[17px] w-7 items-center justify-center rounded-sm border border-[#5c1c1c] bg-linear-to-b from-[#e8a08c] via-[#c8452c] to-[#d06850]">
            <svg viewBox="0 0 10 10" className="h-[9px] w-[10px]"><path d="M1 1L9 9M9 1L1 9" stroke="#444" strokeWidth="3.600" /><path d="M1 1L9 9M9 1L1 9" stroke="#fff" strokeWidth="2" /></svg>
          </button>
        </header>
        <nav className="flex h-8 bg-linear-to-b from-[#bdf4fc] via-[#7cb2dc] to-[#2a68b4] pb-px">
          <Tool text="Retornar" at={-1} icon={<Back />} className="w-[56px]" />
          <Tool text="Localizar" icon={<Lens glass="#b8c4f4" rim="#7468c8" handle="#4a6cc8" />} className="w-[60px]" />
          <Tool text="Excluir" icon={<Trash />} className="w-[42px]" />
          <Tool text="Grade" icon={<GridIcon />} className="w-12" />
          <span className="ml-1 mt-5"><Arrow color="#fff" /></span>
        </nav>
        <div className="mr-px mt-[2px] h-[66px] border-2 border-[#a8a8a8] bg-[#fafafa]">
          <h2 className="h-4 bg-[#bcbcbc] pl-px font-['Open_Sans',sans-serif] text-[11px] font-bold leading-4">Auditoria</h2>
          <div className="flex pl-[5px]">
            <Combo id="de" label="Período" value="03/11/2025" className="w-[76px]" />
            <div className="ml-1 flex w-[76px] items-end">
              <div className="flex h-5 w-full items-center border border-[#ababab] bg-white pl-[2px] pr-1">
                <select aria-label="Período até" className="h-full min-w-0 flex-1 appearance-none outline-none"><option>03/11/2025</option></select>
                <Arrow />
              </div>
            </div>
            <button type="button" aria-label="Calendário" className="ml-[7px] flex h-5 w-[35px] items-center justify-between self-end border border-[#adadad] bg-[#e1e1e1] pl-1 pr-px">
              <Calendar />
              <span className="flex h-full items-center border-l border-[#adadad] pl-px"><Arrow /></span>
            </button>
            <Combo id="usuario" label="Usuário" className="ml-[11px] w-[198px]" />
            <Combo id="operacao" label="Operação" className="ml-[10px] w-[198px]" />
            <div className="ml-[11px] w-[126px]">
              <label htmlFor="contem" className="block h-4 pl-px leading-4">Descrição Contenha</label>
              <input id="contem" className={INPUT} />
            </div>
            <div className="ml-1 w-[126px]">
              <div className="flex h-4 items-center gap-1 pl-[3px]">
                <input id="e" name="modo" type="radio" defaultChecked className={RADIO} />
                <label htmlFor="e">e</label>
                <input id="ou" name="modo" type="radio" className={`ml-[6px] ${RADIO}`} />
                <label htmlFor="ou">ou</label>
              </div>
              <input aria-label="Segundo termo" className={INPUT} />
            </div>
            <div className="ml-[11px] w-[77px]">
              <label htmlFor="transacao" className="block h-4 pl-px leading-[14px]">Transação</label>
              <input id="transacao" className={INPUT} />
            </div>
          </div>
        </div>
        <nav className="flex h-[22px] items-end border-b border-t border-b-black border-t-[#8c8c8c] bg-white pl-[3px]">
          <button type="button" className="-mb-px h-[19px] w-[56px] border border-b-0 border-black bg-[#fafafa]"><u>1</u> Consulta</button>
          <button type="button" className="h-[19px] px-1"><u>2</u> Seleção</button>
        </nav>
        <div className="mt-[2px] h-8 bg-[#003f80] pl-[7px] leading-8 text-white">Arraste um título de coluna aqui para criar um grupo</div>
        <table className="h-[309px] w-full table-fixed border-separate border-spacing-0 border-t border-[#102850]">
          <colgroup>
            <col className="w-[11px]" />
            <col className="w-[124px]" />
            <col className="w-[74px]" />
            <col className="w-[78px]" />
            <col className="w-[110px]" />
            <col />
          </colgroup>
          <thead>
            <tr className="bg-[#3168c8] font-['Liberation_Sans',sans-serif] text-[11px] leading-3 text-white">
              <th className={HEAD}><svg viewBox="0 0 8 12" className="h-3 w-2"><path d="M2 2H8M3 5H8M2 8H8M3 11H8M0 2H1M0 8H1" stroke="#9cc0f4" /></svg></th>
              <th className={HEAD}>Operação</th>
              <th className={HEAD}>Data</th>
              <th className={HEAD}>Horário</th>
              <th className={HEAD}>
                <span className="flex items-center justify-between pr-[2px]">
                  Usuário
                  <svg viewBox="0 0 9 9" className="h-[9px] w-[9px]"><path d="M0.500 0.500H8.500V8.500H0.500ZM2 2.500H7M4.500 2.500V7" fill="none" stroke="#1c34d8" /></svg>
                </span>
              </th>
              <th className={HEAD}>Descrição</th>
            </tr>
          </thead>
          <tbody>
            {LOG.map(([op, time, text], i) => {
              const Icon = LOG_ICONS[op];
              const selected = i === 5;
              return (
                <tr key={i} className={`leading-3 ${selected ? 'bg-[#8080ff] text-white' : i % 2 ? 'bg-[#d9eaf6]' : 'bg-[#a5c3ea]'}`}>
                  <td className="border-b border-r border-[#102850] bg-[#a5c3ea] p-0">
                    {selected && <svg viewBox="0 0 6 8" className="mx-auto h-2 w-[6px]"><path d="M1 0L5 4L1 8Z" fill="#000" /></svg>}
                  </td>
                  <td className={CELL}><span className="flex h-4 items-center gap-[3px]"><Icon />{op}</span></td>
                  <td className={CELL}>03/11/2025</td>
                  <td className={`${CELL} ${selected ? 'border-t border-dotted !border-black bg-[#d9eaf6] text-[#151515]' : ''}`}>{time}</td>
                  <td className={CELL}>TEOREMA</td>
                  <td className={CELL}>{text}</td>
                </tr>
              );
            })}
          </tbody>
        </table>
        <div className="h-4 border-b border-[#a0a0a0] bg-[#a5c3ea]" />
        <div className="h-[2px] bg-[#f8f8e8]" />
      </div>
    </section>
  );
}

export default function App() {
  return (
    <main className="border-b border-l-2 border-r border-t border-black bg-white pb-[6px]">
      <div className="grid grid-cols-[1007fr_951fr] gap-x-[7px] border-b border-black pb-[6px]">
        <CompanyParams />
        <CounterSales />
      </div>
      <AuditLog />
    </main>
  );
}
